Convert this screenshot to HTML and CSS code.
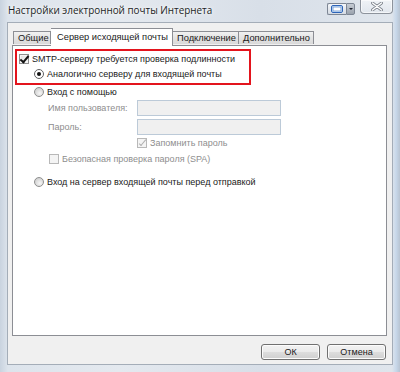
FILE: index.html
```html
<!DOCTYPE html>
<html lang="ru">
<head>
<meta charset="utf-8">
<link rel="stylesheet" href="styles.css">
</head>
<body>
<div class="window">
  <div class="titlebar">
    <div class="title">Настройки электронной почты Интернета</div>
    <div class="tb-tools">
      <div class="tb-snap">
        <svg width="12" height="8" viewBox="0 0 12 8"><rect x="0.5" y="0.5" width="11" height="7" rx="1.5" fill="#dbe9f8" stroke="#2d64b8"/><rect x="2" y="2" width="8" height="4" fill="#ffffff" stroke="#5f8fd0" stroke-width="0.8"/></svg>
      </div>
      <div class="tb-drop"><span class="tri"></span></div>
    </div>
    <div class="tb-close">
      <svg width="12" height="9" viewBox="0 0 12 9"><path d="M1.5 1 L10.5 8 M10.5 1 L1.5 8" stroke="#7b818a" stroke-width="3" stroke-linecap="round"/><path d="M1.5 1 L10.5 8 M10.5 1 L1.5 8" stroke="#ffffff" stroke-width="1.5" stroke-linecap="round"/></svg>
    </div>
  </div>
  <div class="client">
    <div class="tabs">
      <div class="tab first">Общие</div>
      <div class="tab selected">Сервер исходящей почты</div>
      <div class="tab">Подключение</div>
      <div class="tab">Дополнительно</div>
    </div>
    <div class="panel">
      <div class="redbox">
        <div class="row r1"><span class="cb checked"></span><span class="lbl">SMTP-серверу требуется проверка подлинности</span></div>
        <div class="row r2"><span class="rb on"></span><span class="lbl">Аналогично серверу для входящей почты</span></div>
      </div>
      <div class="row r3"><span class="rb"></span><span class="lbl">Вход с помощью</span></div>
      <div class="row field f1"><span class="flabel dis">Имя пользователя:</span><span class="input"></span></div>
      <div class="row field f2"><span class="flabel dis">Пароль:</span><span class="input"></span></div>
      <div class="row remember"><span class="cb checked disabled"></span><span class="lbl dis">Запомнить пароль</span></div>
      <div class="row spa"><span class="cb disabled"></span><span class="lbl dis">Безопасная проверка пароля (SPA)</span></div>
      <div class="row r4"><span class="rb"></span><span class="lbl">Вход на сервер входящей почты перед отправкой</span></div>
    </div>
    <div class="buttons">
      <div class="btn">ОК</div>
      <div class="btn">Отмена</div>
    </div>
  </div>
</div>
</body>
</html>
```

FILE: styles.css
```css
html, body {
  margin: 0;
  padding: 0;
}
body {
  width: 400px;
  height: 372px;
  overflow: hidden;
  font-family: "Liberation Sans", Arial, sans-serif;
}
.window {
  width: 400px;
  height: 372px;
  box-sizing: border-box;
  background: linear-gradient(90deg, #c9d3df 0px, #dde4ec 8px, #e4e9ef 120px, #d8dfe8 260px, #dfe5ec 392px, #c8d8ea 396px, #b8c4d2 400px);
  padding: 0 7px 7px 7px;
  display: flex;
  flex-direction: column;
  position: relative;
}
.titlebar {
  height: 22px;
  display: flex;
  align-items: flex-start;
  position: relative;
}
.title {
  font-family: "Open Sans", "Liberation Sans", sans-serif;
  font-size: 9.9px;
  color: #1b1e24;
  margin-top: 3px;
  margin-left: 1px;
  text-shadow: 0 0 6px rgba(255,255,255,0.9), 0 0 3px rgba(255,255,255,0.9);
  white-space: nowrap;
}
.tb-tools {
  margin-left: auto;
  margin-top: 3px;
  display: flex;
  height: 11px;
}
.tb-snap {
  width: 18px;
  height: 10px;
  border: 1px solid #7d8694;
  border-right: none;
  border-radius: 2px 0 0 2px;
  background: linear-gradient(#f4f6f9, #d5dbe3);
  display: flex;
  align-items: center;
  justify-content: center;
}
.tb-drop {
  width: 7px;
  height: 10px;
  border: 1px solid #7d8694;
  border-radius: 0 2px 2px 0;
  background: linear-gradient(#c6ccd4, #9aa2ad);
  display: flex;
  align-items: center;
  justify-content: center;
}
.tri {
  width: 0;
  height: 0;
  border-left: 2px solid transparent;
  border-right: 2px solid transparent;
  border-top: 2px solid #1e2430;
}
.tb-close {
  margin-left: 5px;
  width: 33px;
  height: 14px;
  box-sizing: border-box;
  border: 1px solid #8d939c;
  border-top: none;
  border-radius: 0 0 4px 4px;
  background: linear-gradient(rgba(255,255,255,0.55), rgba(230,234,240,0.35));
  box-shadow: inset 0 0 0 1px rgba(255,255,255,0.6);
  display: flex;
  align-items: center;
  justify-content: center;
}
.client {
  flex: 1;
  background: #f0f0f0;
  border: 1px solid #a4adb8;
  display: flex;
  flex-direction: column;
  padding: 4px 5px 0 4px;
  font-size: 9px;
  color: #1a1a1a;
}
.tabs {
  display: flex;
  height: 18px;
  align-items: flex-end;
  padding-left: 1px;
  position: relative;
  z-index: 2;
}
.tab {
  height: 13px;
  box-sizing: border-box;
  border: 1px solid #8c8e94;
  border-bottom: none;
  border-left: none;
  background: linear-gradient(#f2f2f2, #e3e3e3 50%, #d9d9d9);
  padding: 0 3px 0 4px;
  line-height: 12px;
  margin-bottom: 1px;
  white-space: nowrap;
  font-size: 9.3px;
}
.tab.first {
  border-left: 1px solid #8c8e94;
  width: 38px;
}
.tab.selected {
  height: 18px;
  margin-bottom: -1px;
  background: #ffffff;
  border-left: none;
  padding: 0 5px 0 6px;
  line-height: 16px;
  width: 122px;
}
.tab:nth-child(3) { width: 66px; }
.tab:nth-child(4) { width: 75px; }
.panel {
  height: 291px;
  box-sizing: border-box;
  background: #ffffff;
  border: 1px solid #8c8e94;
  padding: 3px 0 0 0;
  display: flex;
  flex-direction: column;
}
.redbox {
  margin-left: 2px;
  width: 236px;
  height: 36px;
  box-sizing: border-box;
  border: 2px solid #e3141d;
  display: flex;
  flex-direction: column;
}
.row {
  display: flex;
  align-items: center;
  white-space: nowrap;
}
.r1 { height: 15px; padding-left: 2px; }
.r2 { height: 16px; padding-left: 17px; }
.r3 { height: 13px; padding-left: 21px; }
.r4 { height: 16px; padding-left: 21px; margin-top: 7px; }
.field { height: 16px; padding-left: 35px; }
.f1 { margin-top: 2px; }
.f2 { margin-top: 3px; }
.remember { height: 16px; padding-left: 124px; margin-top: 0; }
.spa { height: 16px; padding-left: 36px; }
.lbl { margin-left: 3px; }
.dis { color: #8e8e8e; }
.flabel { width: 89px; }
.input {
  width: 144px;
  height: 16px;
  box-sizing: border-box;
  border: 1px solid #bccad8;
  background: #f0f0f0;
}
.cb {
  width: 10px;
  height: 10px;
  box-sizing: border-box;
  border: 1px solid #8f8f8f;
  background: linear-gradient(135deg, #dcdcdc, #ffffff);
  box-shadow: inset 0 0 0 1px #f4f4f4;
  position: relative;
  flex: none;
}
.cb.disabled {
  border-color: #b8b8b8;
  background: #f4f4f4;
}
.cb.checked::after {
  content: "";
  position: absolute;
  left: 2px;
  top: -1px;
  width: 3px;
  height: 7px;
  border-right: 2px solid #151515;
  border-bottom: 2px solid #151515;
  transform: rotate(40deg);
}
.cb.checked.disabled::after {
  border-color: #b0b0b0;
  border-width: 1px;
  left: 3px;
  width: 2px;
}
.rb {
  width: 10px;
  height: 10px;
  box-sizing: border-box;
  border-radius: 50%;
  border: 1px solid #8e8f8f;
  background: radial-gradient(circle at 60% 65%, #f6f6f6 0%, #d4d4d4 70%, #c4c4c4 100%);
  position: relative;
  flex: none;
}
.rb.on {
  background: #ffffff;
  border-color: #5f6062;
}
.rb.on::after {
  content: "";
  position: absolute;
  left: 2px;
  top: 2px;
  width: 4px;
  height: 4px;
  border-radius: 50%;
  background: #111111;
}
.buttons {
  display: flex;
  justify-content: flex-end;
  gap: 7px;
  padding-top: 8px;
  padding-right: 1px;
}
.btn {
  width: 59px;
  height: 16px;
  box-sizing: border-box;
  border: 1px solid #707070;
  border-radius: 3px;
  background: linear-gradient(#f2f2f2 0%, #ebebeb 48%, #dddddd 52%, #cfcfcf 100%);
  box-shadow: inset 0 0 0 1px #fcfcfc;
  display: flex;
  align-items: center;
  justify-content: center;
  color: #1a1a1a;
}
```
